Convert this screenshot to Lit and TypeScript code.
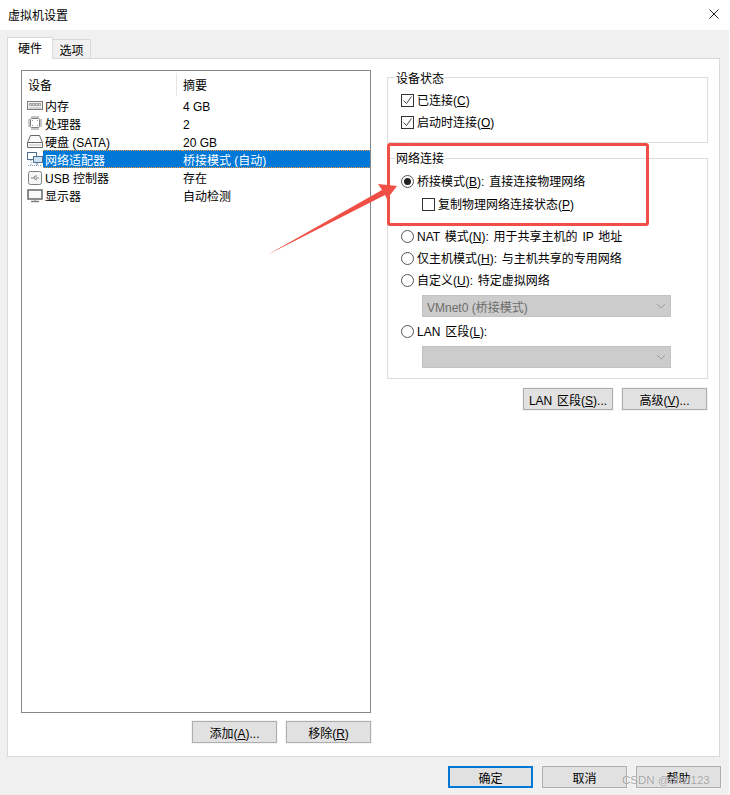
import { LitElement, html, css, svg } from "lit";
import { customElement } from "lit/decorators.js";

const icons: Record<string, any> = {
  mem: svg`<rect x=".5" y="4.5" width="15" height="8" fill="#f2f2f2" stroke="#7c7c7c"/><rect x="2" y="6" width="12" height="3" fill="#a8a8a8"/><path d="M3 7.5h1M6 7.5h1M9 7.5h1M12 7.5h1" stroke="#e8e8e8"/><path d="M2 11h12" stroke="#b5b5b5"/>`,
  cpu: svg`<rect x="3.5" y="3.5" width="9" height="9" rx="1" fill="#fff" stroke="#808080"/><path d="M5 5.5h1M10 5.5h1M5 10.5h1M10 10.5h1" stroke="#999"/><path d="M5 1v2M7 1v2M9 1v2M11 1v2M5 13v2M7 13v2M9 13v2M11 13v2M1 5h2M1 7h2M1 9h2M1 11h2M13 5h2M13 7h2M13 9h2M13 11h2" stroke="#8c8c8c"/>`,
  disk: svg`<path d="M3.5 2.5h9l3 7v5h-15v-5z" fill="#fbfbfb" stroke="#666"/><path d="M1 9.5h14" stroke="#666"/><path d="M2 12h12" stroke="#bbb"/>`,
  net: svg`<rect x=".5" y="1.5" width="9" height="7" fill="#fff" stroke="#4f6f8f"/><rect x="6.5" y="5.5" width="9" height="6" fill="#cfe2f3" stroke="#4f6f8f"/><path d="M10 12v2" stroke="#4f6f8f"/><path d="M1 14.5h14" stroke="#7a9ab8" stroke-dasharray="1 1"/><path d="M4 9v5" stroke="#7a9ab8" stroke-dasharray="1 1"/>`,
  usb: svg`<rect x="1.5" y="2.5" width="13" height="13" rx="2" fill="#f6f6f6" stroke="#808080"/><path d="M4 9h8M6 9l2-2h2M7 9l2 2h1" fill="none" stroke="#8a8a8a"/>`,
  mon: svg`<rect x="1" y="3" width="14" height="9" fill="#f8f8f8" stroke="#707070" stroke-width="1.6"/><path d="M4 14.5h8" stroke="#777" stroke-width="1.4"/><path d="M6.5 13h3" stroke="#999"/>`,
};

const rows: [string, string, string][] = [
  ["mem", "内存", "4 GB"],
  ["cpu", "处理器", "2"],
  ["disk", "硬盘 (SATA)", "20 GB"],
  ["net", "网络适配器", "桥接模式 (自动)"],
  ["usb", "USB 控制器", "存在"],
  ["mon", "显示器", "自动检测"],
];

@customElement("app-root")
export class AppRoot extends LitElement {
  static styles = css`
    :host { display: block; position: relative; width: 730px; height: 795px; overflow: hidden; background: #f0f0f0;
      box-sizing: border-box; border-right: 1px solid #fff;
      font-family: "Liberation Sans", "Noto Sans CJK SC", sans-serif; font-size: 12px; color: #000; }
    u { text-decoration: underline; }
    .title { box-sizing: border-box; height: 30px; background: #fff; display: flex; align-items: center; justify-content: space-between; padding: 0 10px 2px 8px; }
    .title .close { width: 10px; height: 10px; }
    .tabs { height: 28px; display: flex; align-items: flex-end; padding-left: 7px; box-sizing: border-box; position: relative; z-index: 1; }
    .tab { box-sizing: border-box; display: flex; align-items: center; justify-content: center; border: 1px solid #d9d9d9; border-bottom: none; background: #f0f0f0; }
    .tab.on { width: 46px; height: 22px; background: #fff; margin-bottom: -1px; padding-bottom: 2px; }
    .tab.off { width: 39px; height: 19px; margin-left: -1px; }
    .panel { box-sizing: border-box; margin: 0 9px 0 7px; height: 699px; background: #fff; border: 1px solid #d9d9d9; padding: 11px 11px 0 13px; display: grid; grid-template-columns: 350px 321px; column-gap: 16px; }
    .left { display: flex; flex-direction: column; }
    .list { box-sizing: border-box; height: 643px; border: 1px solid #82878c; padding-top: 2px; }
    .head { display: grid; grid-template-columns: 155px 1fr; height: 23px; align-items: center; }
    .head span { padding-left: 6px; height: 23px; line-height: 26px; }
    .head span:first-child { border-right: 1px solid #e5e5e5; }
    .rowx { display: grid; grid-template-columns: 21px 139px 1fr; height: 18px; align-items: center; white-space: nowrap; }
    .rowx svg { width: 16px; height: 16px; margin-left: 5px; }
    .rowx .n { height: 18px; line-height: 23px; padding-left: 2px; box-sizing: border-box; }
    .rowx .s { height: 18px; line-height: 23px; padding-left: 1px; box-sizing: border-box; }
    .rowx.sel .n, .rowx.sel .s { background: #0078d7; color: #fff; border-top: 1px dotted #f09a3c; border-bottom: 1px dotted #f09a3c; line-height: 21px; overflow: hidden; }
    .lbtns { display: flex; justify-content: flex-end; gap: 9px; margin-top: 8px; }
    .btn { box-sizing: border-box; width: 85px; height: 22px; background: #e1e1e1; border: 1px solid #adadad; box-shadow: 0 0 0 1px #f4f4f4; display: flex; align-items: center; justify-content: center; white-space: nowrap; word-spacing: 1.5px; }
    .right { display: flex; flex-direction: column; }
    .group { box-sizing: border-box; position: relative; border: 1px solid #dcdcdc; padding: 11px 0 0 13px; }
    .group > .cap { position: absolute; left: 7px; top: -8px; background: #fff; padding: 0 1px; line-height: 16px; }
    .g1 { height: 66px; margin-top: 7px; }
    .g1 > .cap { top: -7px; }
    .g2 { height: 221px; margin-top: 15px; }
    .opt { display: flex; align-items: center; gap: 3px; height: 22px; white-space: nowrap; word-spacing: 1.5px; }
    .opt > span:last-child { margin-bottom: 2px; }
    .opt.sub { margin: 1px 0 10px 21px; }
    .box { box-sizing: border-box; width: 13px; height: 13px; border: 1px solid #333; background: #fff; flex: none; display: block; }
    .box svg { display: block; }
    .radio { box-sizing: border-box; width: 13px; height: 13px; border: 1px solid #555; border-radius: 50%; background: #fff; flex: none; position: relative; }
    .radio.on::after { content: ""; position: absolute; left: 2px; top: 2px; width: 7px; height: 7px; border-radius: 50%; background: #222; }
    .drop { box-sizing: border-box; width: 249px; height: 22px; margin: 4px 0 3px 21px; background: #ccc; border: 1px solid #c2c2c2; display: flex; align-items: center; justify-content: space-between; padding: 0 4px; color: #6d6d6d; }
    .drop svg { width: 10px; height: 6px; }
    .rbtns { display: flex; justify-content: flex-end; gap: 9px; margin-top: 9px; padding-right: 1px; }
    .rbtns .btn { width: 90px; }
    .rbtns .btn + .btn { width: 85px; }
    .foot { display: flex; justify-content: flex-end; gap: 9px; padding: 9px 8px 0 0; }
    .foot .btn { width: 85px; }
    .foot .btn.def { border: 2px solid #0078d7; box-shadow: none; }
    .mark { position: absolute; left: 387px; top: 143px; width: 262px; height: 83px; box-sizing: border-box; border: 3px solid #ef4f45; border-radius: 3px; pointer-events: none; }
    .arrow { position: absolute; left: 0; top: 0; width: 730px; height: 795px; pointer-events: none; }
    .wm { position: absolute; left: 622px; top: 774px; font-size: 11.5px; color: rgba(125,125,125,.7); text-shadow: 0 0 1px #fff; }
  `;

  private check() {
    return html`<span class="box"><svg width="11" height="11" viewBox="0 0 11 11"><path d="M1.5 5.5l3 3 5-7" fill="none" stroke="#444"/></svg></span>`;
  }
  private chev() {
    return html`<svg viewBox="0 0 10 6"><path d="M1 1l4 4 4-4" fill="none" stroke="#a0a0a0"/></svg>`;
  }

  render() {
    return html`
      <div class="title"><span>虚拟机设置</span>
        <svg class="close" viewBox="0 0 10 10"><path d="M.5.5l9 9M9.5.5l-9 9" stroke="#222" fill="none"/></svg>
      </div>
      <div class="tabs"><div class="tab on">硬件</div><div class="tab off">选项</div></div>
      <div class="panel">
        <div class="left">
          <div class="list">
            <div class="head"><span>设备</span><span>摘要</span></div>
            ${rows.map(([i, n, s]) => html`<div class="rowx ${i === "net" ? "sel" : ""}">
              <svg viewBox="0 0 16 16">${icons[i]}</svg><span class="n">${n}</span><span class="s">${s}</span></div>`)}
          </div>
          <div class="lbtns"><div class="btn"><span>添加(<u>A</u>)...</span></div><div class="btn"><span>移除(<u>R</u>)</span></div></div>
        </div>
        <div class="right">
          <div class="group g1"><span class="cap">设备状态</span>
            <div class="opt">${this.check()}<span>已连接(<u>C</u>)</span></div>
            <div class="opt">${this.check()}<span>启动时连接(<u>O</u>)</span></div>
          </div>
          <div class="group g2"><span class="cap">网络连接</span>
            <div class="opt"><span class="radio on"></span><span>桥接模式(<u>B</u>): 直接连接物理网络</span></div>
            <div class="opt sub"><span class="box"></span><span>复制物理网络连接状态(<u>P</u>)</span></div>
            <div class="opt"><span class="radio"></span><span>NAT 模式(<u>N</u>): 用于共享主机的 IP 地址</span></div>
            <div class="opt"><span class="radio"></span><span>仅主机模式(<u>H</u>): 与主机共享的专用网络</span></div>
            <div class="opt"><span class="radio"></span><span>自定义(<u>U</u>): 特定虚拟网络</span></div>
            <div class="drop"><span>VMnet0 (桥接模式)</span>${this.chev()}</div>
            <div class="opt"><span class="radio"></span><span>LAN 区段(<u>L</u>):</span></div>
            <div class="drop"><span></span>${this.chev()}</div>
          </div>
          <div class="rbtns"><div class="btn"><span>LAN 区段(<u>S</u>)...</span></div><div class="btn"><span>高级(<u>V</u>)...</span></div></div>
        </div>
      </div>
      <div class="foot"><div class="btn def">确定</div><div class="btn">取消</div><div class="btn">帮助</div></div>
      <div class="mark"></div>
      <svg class="arrow" viewBox="0 0 730 795"><path d="M267 255L382 190L378 184L397 186L387 199L385 195Z" fill="#ef4f45"/></svg>
      <div class="wm">CSDN @hhzi123</div>
    `;
  }
}
